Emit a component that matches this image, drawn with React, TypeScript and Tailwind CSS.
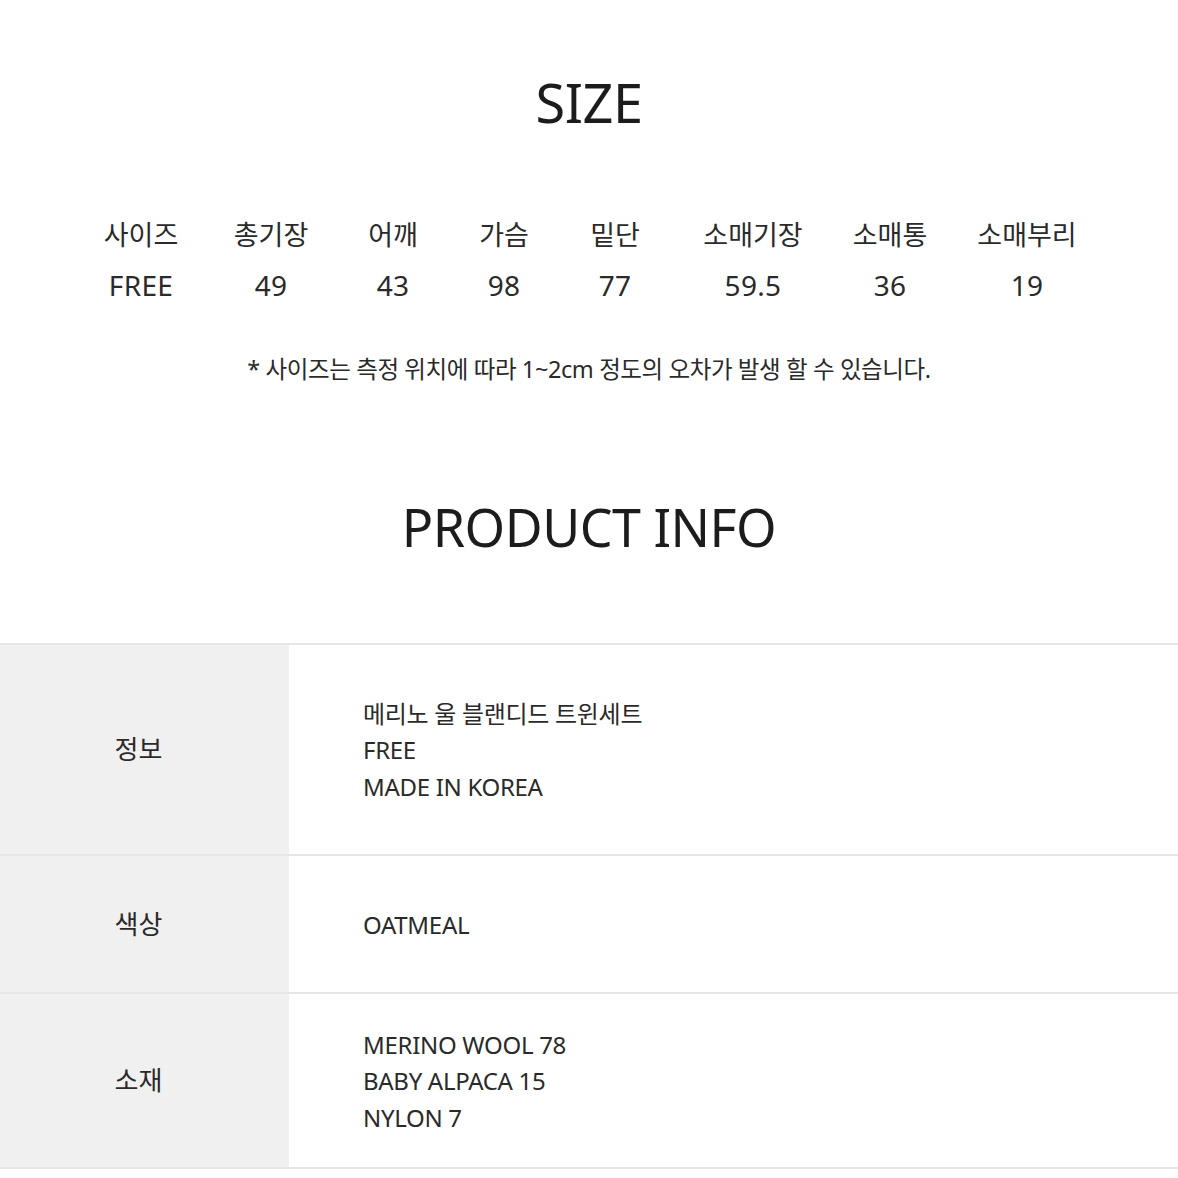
const sizeCols = [
  { label: '사이즈', value: 'FREE', w: 'w-[130px]' },
  { label: '총기장', value: '49', w: 'w-[130px]' },
  { label: '어깨', value: '43', w: 'w-[114px]' },
  { label: '가슴', value: '98', w: 'w-[108px]' },
  { label: '밑단', value: '77', w: 'w-[114px]' },
  { label: '소매기장', value: '59.5', w: 'w-[162px]' },
  { label: '소매통', value: '36', w: 'w-[112px]' },
  { label: '소매부리', value: '19', w: 'w-[162px]' },
];

const infoRows = [
  { label: '정보', lines: ['메리노 울 블랜디드 트윈세트', 'FREE', 'MADE IN KOREA'], h: 'h-[211px]' },
  { label: '색상', lines: ['OATMEAL'], h: 'h-[138px]' },
  { label: '소재', lines: ['MERINO WOOL 78', 'BABY ALPACA 15', 'NYLON 7'], h: 'h-[175px]' },
];

export default function App() {
  return (
    <div className="h-[1178px] w-[1178px] overflow-hidden bg-white font-['Noto_Sans','Noto_Sans_CJK_KR',sans-serif] text-[#1c1c1c]">
      <h2 className="pt-[72px] text-center text-[54px] leading-[60px] tracking-[-0.5px]">SIZE</h2>

      <div className="mt-[86px] flex pl-[76px]">
        {sizeCols.map((col) => (
          <div key={col.label} className={`${col.w} flex flex-col items-center`}>
            <span className="text-[27px] leading-[34px] text-[#2a2a2a]">{col.label}</span>
            <span className="mt-[16px] text-[28px] leading-[34px] tracking-[0.3px] text-[#2a2a2a]">{col.value}</span>
          </div>
        ))}
      </div>

      <p className="mt-[52px] text-center text-[23.5px] leading-[30px] tracking-[-0.4px] text-[#2a2a2a]">
        * 사이즈는 측정 위치에 따라 1~2cm 정도의 오차가 발생 할 수 있습니다.
      </p>

      <h2 className="mt-[112px] text-center text-[52px] leading-[62px] tracking-[-0.5px]">PRODUCT INFO</h2>

      <div className="mt-[85px] border-t-2 border-[#e6e6e6]">
        {infoRows.map((row) => (
          <div key={row.label} className={`${row.h} flex border-b-2 border-[#e6e6e6]`}>
            <div className="flex w-[289px] items-center justify-center bg-[#f0f0f0] pr-[12px] text-[26px] text-[#2a2a2a]">
              {row.label}
            </div>
            <div className="flex flex-col justify-center pl-[74px] pt-[2px]">
              {row.lines.map((line) => (
                <span key={line} className="text-[24px] leading-[36.5px] tracking-[-0.3px] text-[#2a2a2a]">
                  {line}
                </span>
              ))}
            </div>
          </div>
        ))}
      </div>
    </div>
  );
}
